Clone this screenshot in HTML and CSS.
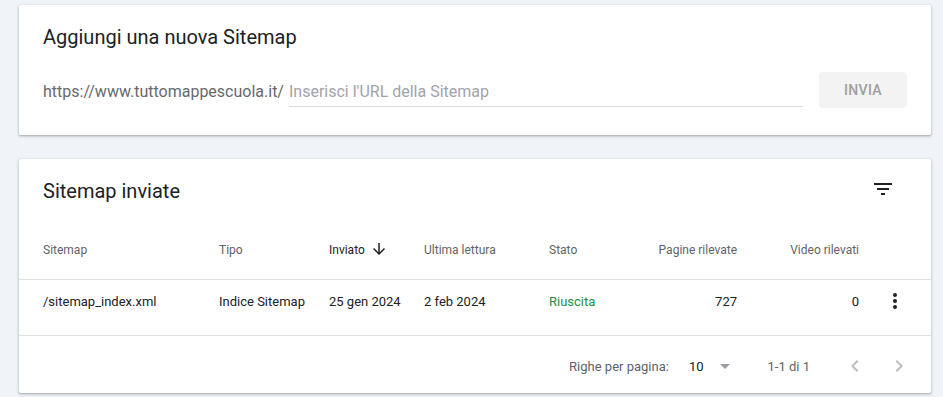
FILE: index.html
```html
<!DOCTYPE html>
<html>
  <head>
    <meta charset="UTF-8">
    <link rel="stylesheet" href="styles.css">
  </head>
  <body>
    <div class="page">

      <div class="card add-card">
        <h2 class="card-title">Aggiungi una nuova Sitemap</h2>
        <div class="add-row">
          <span class="prefix">https://www.tuttomappescuola.it/</span>
          <input class="url-input" type="text" placeholder="Inserisci l'URL della Sitemap">
          <button class="btn-send">INVIA</button>
        </div>
      </div>

      <div class="card list-card">
        <div class="list-head">
          <h2 class="card-title">Sitemap inviate</h2>
          <svg class="icon filter" viewBox="0 0 24 24"><path d="M10 18h4v-2h-4v2zM3 6v2h18V6H3zm3 7h12v-2H6v2z"/></svg>
        </div>
        <table class="sitemaps">
          <colgroup>
            <col style="width:200px">
            <col style="width:110px">
            <col style="width:95px">
            <col style="width:125px">
            <col style="width:71px">
            <col style="width:117px">
            <col style="width:122px">
            <col style="width:72px">
          </colgroup>
          <tr>
            <th class="first">Sitemap</th>
            <th>Tipo</th>
            <th class="sorted">Inviato <svg class="icon sort" viewBox="0 0 24 24"><path d="M20 12l-1.41-1.41L13 16.17V4h-2v12.17l-5.58-5.59L4 12l8 8 8-8z"/></svg></th>
            <th>Ultima lettura</th>
            <th>Stato</th>
            <th class="num">Pagine rilevate</th>
            <th class="num">Video rilevati</th>
            <th></th>
          </tr>
          <tr>
            <td class="first">/sitemap_index.xml</td>
            <td>Indice Sitemap</td>
            <td>25 gen 2024</td>
            <td>2 feb 2024</td>
            <td class="ok">Riuscita</td>
            <td class="num">727</td>
            <td class="num">0</td>
            <td class="menu"><svg class="icon" viewBox="0 0 24 24"><circle cx="12" cy="6" r="2"/><circle cx="12" cy="12" r="2"/><circle cx="12" cy="18" r="2"/></svg></td>
          </tr>
        </table>
        <div class="pager">
          <span class="pager-label">Righe per pagina:</span>
          <span class="pager-size">10</span>
          <svg class="icon drop" viewBox="0 0 24 24"><path d="M7 10l5 5 5-5z"/></svg>
          <span class="pager-range">1-1 di 1</span>
          <svg class="icon chev" viewBox="0 0 24 24"><path d="M15.41 7.41L14 6l-6 6 6 6 1.41-1.41L10.83 12z"/></svg>
          <svg class="icon chev next" viewBox="0 0 24 24"><path d="M8.59 16.59L10 18l6-6-6-6-1.41 1.41L13.17 12z"/></svg>
        </div>
      </div>

    </div>
  </body>
</html>
```

FILE: styles.css
```css
html, body {
  margin: 0;
  height: 100%;
}
body {
  background-color: #f0f4f9;
  font-family: Roboto, "Liberation Sans", sans-serif;
  color: #202124;
}
.page {
  padding: 5px 12px 0 19px;
}
.card {
  background: #fff;
  border-radius: 2px;
  box-shadow: 0 1px 2px rgba(60, 64, 67, .3), 0 1px 3px 1px rgba(60, 64, 67, .12);
}
.card-title {
  margin: 0;
  font-size: 20px;
  font-weight: 400;
  line-height: 28px;
  color: #202124;
}
.icon {
  width: 24px;
  height: 24px;
  fill: #202124;
  display: block;
}

/* aggiungi */
.add-card {
  padding: 18px 24px 27px 24px;
  margin-bottom: 24px;
}
.add-row {
  display: flex;
  align-items: center;
  margin-top: 21px;
  height: 36px;
}
.prefix {
  font-size: 16px;
  color: #66696d;
  padding-top: 3px;
}
.url-input {
  flex: 1;
  box-sizing: border-box;
  height: 35px;
  align-self: flex-start;
  margin: 0 16px 0 5px;
  padding: 4px 0 0 0;
  border: none;
  border-bottom: 1px solid #dadce0;
  font-family: inherit;
  font-size: 16px;
  color: #202124;
  outline: none;
}
.url-input::placeholder {
  color: #a0a4a8;
}
.btn-send {
  width: 88px;
  height: 36px;
  border: none;
  border-radius: 4px;
  background: #f3f3f3;
  color: #9e9e9e;
  font-family: inherit;
  font-size: 14px;
  font-weight: 500;
  letter-spacing: .3px;
}

/* elenco */
.list-card {
  height: 234px;
}
.list-head {
  display: flex;
  justify-content: space-between;
  align-items: center;
  padding: 18px 36px 0 24px;
}
.list-head .filter {
  margin-top: -4px;
}
.sitemaps {
  width: 912px;
  table-layout: fixed;
  border-collapse: collapse;
}
.sitemaps th {
  padding: 35px 0 19px 0;
  font-size: 12px;
  font-weight: 400;
  line-height: 20px;
  color: #5f6368;
  text-align: left;
  white-space: nowrap;
  border-bottom: 1px solid #e0e0e0;
}
.sitemaps th.sorted {
  color: #202124;
}
.sitemaps th.sorted .sort {
  display: inline-block;
  width: 18px;
  height: 18px;
  vertical-align: -4px;
  margin-left: 2px;
}
.sitemaps td {
  padding: 12px 0 23px 0;
  font-size: 13px;
  line-height: 20px;
  color: #202124;
  white-space: nowrap;
  border-bottom: 1px solid #e0e0e0;
}
.sitemaps .first {
  padding-left: 24px;
}
.sitemaps .num {
  text-align: right;
}
.sitemaps td.ok {
  color: #1e8e3e;
}
.sitemaps td.menu .icon {
  margin-left: 24px;
  margin-top: -3px;
  margin-bottom: -1px;
}

.pager {
  display: flex;
  align-items: center;
  justify-content: flex-end;
  box-sizing: border-box;
  height: 57px;
  padding: 3px 20px 0 0;
  font-size: 13px;
  color: #5f6368;
}
.pager-size {
  margin-left: 20px;
  color: #202124;
}
.pager .drop {
  fill: #9aa0a6;
  margin-left: 9px;
}
.pager-range {
  margin-left: 31px;
}
.pager .chev {
  fill: #bdbdbd;
  margin-left: 33px;
}
.pager .chev.next {
  margin-left: 20px;
}
```
